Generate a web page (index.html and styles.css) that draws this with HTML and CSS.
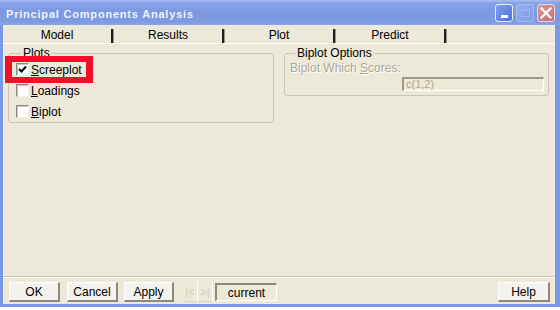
FILE: index.html
```html
<!DOCTYPE html>
<html>
<head>
<meta charset="utf-8">
<link rel="stylesheet" href="styles.css">
</head>
<body>
<div class="window">
  <div class="titlebar">
    <span class="title">Principal Components Analysis</span>
    <div class="tbtns">
      <div class="tb tb-min"><span class="minbar"></span></div>
      <div class="tb tb-max"><span class="maxbox"></span></div>
      <div class="tb tb-close">
        <svg width="12" height="12" viewBox="0 0 12 12"><path d="M1.5 1.5 L10.5 10.5 M10.5 1.5 L1.5 10.5" stroke="#fff" stroke-width="2.2" stroke-linecap="square"/></svg>
      </div>
    </div>
  </div>
  <div class="frame">
    <div class="tabs">
      <div class="tab"><span class="tablabel">Model</span><span class="tabsep"></span></div>
      <div class="tab"><span class="tablabel">Results</span><span class="tabsep"></span></div>
      <div class="tab"><span class="tablabel">Plot</span><span class="tabsep"></span></div>
      <div class="tab"><span class="tablabel">Predict</span><span class="tabsep"></span></div>
    </div>
    <div class="content">
      <fieldset class="group plots">
        <legend>Plots</legend>
        <div class="cbrow">
          <span class="cb"><svg width="9" height="9" viewBox="0 0 9 9"><path d="M1 4 L3.5 6.5 L8 1.5" stroke="#000" stroke-width="2" fill="none"/></svg></span>
          <span class="cblabel"><u>S</u>creeplot</span>
        </div>
        <div class="cbrow">
          <span class="cb"></span>
          <span class="cblabel"><u>L</u>oadings</span>
        </div>
        <div class="cbrow">
          <span class="cb"></span>
          <span class="cblabel"><u>B</u>iplot</span>
        </div>
      </fieldset>
      <fieldset class="group biplot">
        <legend>Biplot Options</legend>
        <div class="disabled-label">Biplot Which <u>S</u>cores:</div>
        <div class="fieldrow"><span class="field">c(1,2)</span></div>
      </fieldset>
    </div>
    <div class="sep"></div>
    <div class="buttons">
      <span class="btn btn-ok">OK</span>
      <span class="btn btn-cancel">Cancel</span>
      <span class="btn btn-apply">Apply</span>
      <span class="nav"><span class="navbtn">|&lt;</span><span class="navbtn">&gt;|</span></span>
      <span class="current">current</span>
      <span class="btn btn-help">Help</span>
    </div>
  </div>
  <div class="bottomedge"></div>
  <div class="desk"></div>
  <div class="highlight"></div>
</div>
</body>
</html>
```

FILE: styles.css
```css
* { box-sizing: border-box; }
html, body { margin: 0; padding: 0; background: #ffffff; }
body { width: 560px; height: 310px; overflow: hidden; font-family: "Liberation Sans", Arial, sans-serif; font-size: 12px; color: #000; }

.window { position: relative; width: 560px; height: 310px; display: flex; flex-direction: column; }

.titlebar {
  height: 25px; flex: none; display: flex; align-items: flex-start;
  padding: 4px 5px 0 6px;
  background: linear-gradient(#a9bdf0 0px, #86a2e8 3px, #7b98e2 12px, #7d9ae3 22px, #8ba6e9 25px);
}
.title {
  font-family: "Liberation Sans", Arial, sans-serif; font-weight: bold; font-size: 11px;
  letter-spacing: 0.8px; color: #eef2fd; line-height: 18px; padding-top: 1px;
}
.tbtns { margin-left: auto; display: flex; gap: 3px; }
.tb { width: 18px; height: 18px; border-radius: 3px; display: flex; align-items: center; justify-content: center; position: relative; }
.tb-min { background: linear-gradient(135deg, #7d9cf0, #4f73dc); border: 1px solid #e8eefc; }
.minbar { width: 7px; height: 3px; background: #fff; margin-top: 7px; }
.tb-max { background: linear-gradient(135deg, #96aeee, #7f9ce6); border: 1px solid #a9bdf0; }
.maxbox { width: 9px; height: 8px; border: 1px solid #9db2ec; border-top-width: 2px; }
.tb-close { background: linear-gradient(135deg, #d99a9c, #c06e73); border: 1px solid #ecd8dc; }

.frame {
  flex: 1; display: flex; flex-direction: column;
  background: #ece9d8;
  border-left: 3px solid #7b98e4; border-right: 5px solid #7b98e4;
}

.tabs { height: 19px; flex: none; display: flex; border-bottom: 1px solid #ffffff; }
.tab { width: 111px; display: flex; }
.tablabel { flex: 1; text-align: center; line-height: 18px; padding-top: 1px; }
.tabsep { width: 2px; height: 14px; align-self: flex-end; background: #1e1e1e; border-right: 1px solid #9a988c; box-sizing: content-box; }

.content { flex: 1; display: flex; gap: 10px; padding: 3px 6px 0 5px; align-items: flex-start; }
.group { margin: 0; border: 1px solid #cbc7b6; border-radius: 3px; padding: 0; min-width: 0; }
.group legend { line-height: 12px; padding: 0 2px; margin-left: 5px; }
.plots { width: 266px; padding: 0 0 0 7px; }
.biplot { flex: 1; padding: 0 4px 4px 5px; }

.cbrow { height: 21px; display: flex; align-items: center; }
.cb {
  width: 13px; height: 13px; background: #fff; display: flex; align-items: center; justify-content: center;
  border-top: 1px solid #8c8a80; border-left: 1px solid #8c8a80; border-right: 1px solid #f4f3ee; border-bottom: 1px solid #f4f3ee;
  box-shadow: inset 1px 1px 0 #c8c6bb;
}
.cblabel { margin-left: 2px; }

.disabled-label { color: #aca899; line-height: 14px; margin-top: 2px; text-shadow: 1px 1px 0 #fff; }
.fieldrow { display: flex; justify-content: flex-end; margin-top: 2px; }
.field {
  width: 142px; height: 14px; line-height: 11px; padding-left: 2px; color: #aca899; font-size: 11px;
  border-top: 2px solid #9c9a90; border-left: 2px solid #9c9a90; border-right: 1px solid #fff; border-bottom: 1px solid #fff;
  background: #ece9d8;
}

.sep { height: 2px; flex: none; border-top: 1px solid #c9c6b5; border-bottom: 1px solid #fff; }

.buttons { height: 26px; flex: none; display: flex; align-items: flex-start; padding: 4px 5px 0 6px; }
.btn {
  height: 20px; display: flex; align-items: center; justify-content: center; padding-top: 1px;
  background: #f3f2ec;
  border-top: 1px solid #fff; border-left: 1px solid #fff;
  border-right: 2px solid #8c8a80; border-bottom: 2px solid #8c8a80;
}
.btn-ok { width: 51px; }
.btn-cancel { width: 51px; margin-left: 7px; }
.btn-apply { width: 50px; margin-left: 6px; }
.nav { display: flex; margin-left: 9px; height: 20px; }
.navbtn { width: 15px; height: 20px; display: flex; align-items: center; justify-content: center; color: #cfcbbd; border-right: 1px solid #fff; border-bottom: 1px solid #d8d5c6; font-size: 11px; }
.current {
  width: 62px; height: 18px; margin-left: 2px; margin-top: 1px; display: flex; align-items: center; justify-content: center;
  border-top: 2px solid #8c8a80; border-left: 2px solid #8c8a80; border-right: 1px solid #fff; border-bottom: 1px solid #fff;
}
.btn-help { width: 52px; margin-left: auto; }

.bottomedge { height: 3px; flex: none; background: #7b98e4; }
.desk { height: 3px; flex: none; background: #ffffff; }

.highlight {
  position: absolute; left: 5px; top: 56px; width: 88px; height: 27px;
  border: 7px solid #f0102a; border-top-width: 6px; border-bottom-width: 6px;
}
```
